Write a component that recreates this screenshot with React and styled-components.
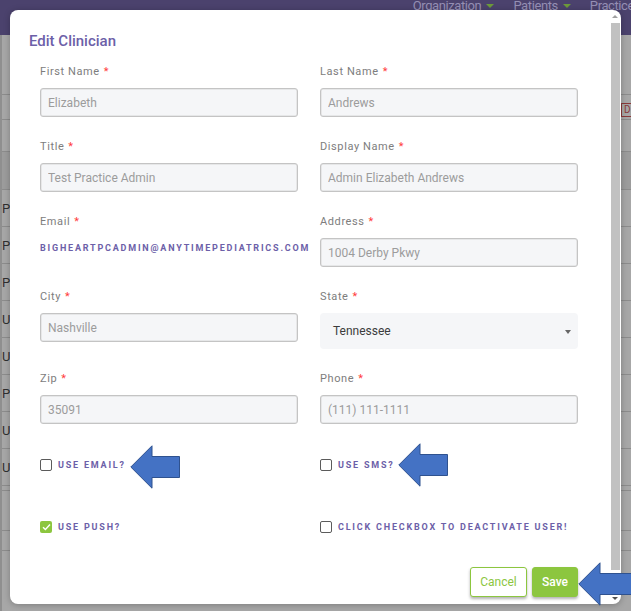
import React from 'react';
import styled, { createGlobalStyle } from 'styled-components';

const Global = createGlobalStyle`
  html, body { margin: 0; padding: 0; }
  body {
    width: 631px; height: 611px; overflow: hidden;
    font-family: Roboto, "Noto Sans", Arial, sans-serif;
    background: #a7a7a7;
  }
  * { box-sizing: border-box; }
`;

const PURPLE = '#6c60a8';
const GREEN = '#8cc63f';

const Page = styled.div`
  position: relative;
  width: 631px;
  height: 611px;
  overflow: hidden;
  background: #a7a7a7;
  display: flex;
  flex-direction: column;
`;

const TopBar = styled.div`
  height: 35px;
  flex: none;
  background: #4b426d;
  display: flex;
  justify-content: flex-end;
  align-items: flex-start;
  overflow: hidden;
`;

const NavList = styled.div`
  display: flex;
  gap: 19px;
  margin-top: -2px;
  margin-right: -3px;
`;

const NavItem = styled.div`
  display: flex;
  align-items: center;
  gap: 5px;
  color: #958fb4;
  font-size: 13px;
  line-height: 15px;
  letter-spacing: -0.4px;
`;

const NavCaret = styled.span`
  width: 0;
  height: 0;
  border-left: 4px solid transparent;
  border-right: 4px solid transparent;
  border-top: 4px solid #6d9a3a;
`;

const Table = styled.div`
  flex: 1;
  display: flex;
  flex-direction: column;
  border-left: 2px solid #8f8f8f;
`;

const TRow = styled.div`
  height: ${p => p.$h}px;
  flex: none;
  display: flex;
  align-items: center;
  justify-content: space-between;
  border-bottom: 1px solid #8c8c8c;
  background: ${p => (p.$dark ? '#9c9c9c' : 'transparent')};
  font-size: 13px;
  color: #2f2f2f;
`;

const Cell = styled.span`
  padding-left: 0;
`;

const TinyButton = styled.span`
  width: 10px;
  height: 14px;
  margin-top: 6px;
  border: 1px solid #8a3a3a;
  border-right: none;
  color: #8a3a3a;
  font-size: 10px;
  line-height: 12px;
  padding-left: 2px;
`;

const Modal = styled.div`
  position: absolute;
  left: 10px;
  top: 10px;
  width: 611px;
  height: 594px;
  background: #fff;
  border-radius: 8px;
  display: flex;
  overflow: hidden;
  box-shadow: 0 1px 6px rgba(0, 0, 0, 0.25);
`;

const ModalBody = styled.div`
  flex: 1;
  display: flex;
  flex-direction: column;
  padding: 22px 31px 7px 19px;
`;

const Title = styled.h2`
  margin: 0;
  font-size: 15px;
  line-height: 18px;
  font-weight: 500;
  color: ${PURPLE};
`;

const Form = styled.div`
  margin-top: 15px;
  padding-left: 11px;
  display: grid;
  grid-template-columns: 258px 258px;
  column-gap: 22px;
  row-gap: 23px;
  align-items: start;
`;

const Field = styled.div`
  display: flex;
  flex-direction: column;
`;

const Label = styled.label`
  font-size: 11px;
  line-height: 14px;
  letter-spacing: 0.6px;
  color: #7d7d7d;
  margin-bottom: 9px;
`;

const Req = styled.span`
  color: #ff3c3c;
  margin-left: 4px;
`;

const Input = styled.input`
  height: 29px;
  width: 100%;
  border: 1px solid #c4c4c4;
  border-radius: 3px;
  background: #f5f6f8;
  padding: 0 7px;
  font-family: inherit;
  font-size: 12px;
  color: #9c9c9c;
  outline: none;
  box-shadow: inset 0 0 0 0.5px #d8d8d8;
`;

const StaticValue = styled.div`
  margin-top: 3px;
  font-size: 9px;
  line-height: 14px;
  font-weight: 700;
  letter-spacing: 1.8px;
  color: ${PURPLE};
  white-space: nowrap;
`;

const SelectBox = styled.div`
  height: 36px;
  border-radius: 4px;
  background: #f5f6f8;
  display: flex;
  align-items: center;
  justify-content: space-between;
  padding: 0 7px 0 13px;
  font-size: 12px;
  color: #3c3c3c;
`;

const SelectCaret = styled.span`
  width: 0;
  height: 0;
  border-left: 3.5px solid transparent;
  border-right: 3.5px solid transparent;
  border-top: 4px solid #666;
  margin-top: 1px;
`;

const Checks = styled.div`
  margin-top: 34px;
  padding-left: 11px;
  display: grid;
  grid-template-columns: 258px 258px;
  column-gap: 22px;
  row-gap: 48px;
`;

const CheckRow = styled.div`
  display: flex;
  align-items: center;
  gap: 6px;
  height: 14px;
`;

const Box = styled.span`
  width: 12px;
  height: 12px;
  flex: none;
  border-radius: 2px;
  border: ${p => (p.$checked ? 'none' : '1.5px solid #5b5b5b')};
  background: ${p => (p.$checked ? GREEN : '#fff')};
  display: flex;
  align-items: center;
  justify-content: center;
`;

const CheckText = styled.span`
  font-size: 9px;
  font-weight: 700;
  letter-spacing: 1.8px;
  color: ${PURPLE};
  white-space: nowrap;
`;

const Footer = styled.div`
  margin-top: auto;
  display: flex;
  justify-content: flex-end;
  gap: 5px;
`;

const Button = styled.button`
  height: 30px;
  padding: 0;
  width: ${p => p.$w}px;
  border-radius: 3px;
  font-family: inherit;
  font-size: 12px;
  font-weight: ${p => (p.$primary ? 500 : 400)};
  border: 1.5px solid ${GREEN};
  background: ${p => (p.$primary ? GREEN : '#fff')};
  color: ${p => (p.$primary ? '#fff' : GREEN)};
  box-shadow: 0 2px 3px rgba(0, 0, 0, 0.3);
`;

const ScrollBar = styled.div`
  width: 12px;
  flex: none;
  display: flex;
  flex-direction: column;
  align-items: center;
  padding: 5px 0 4px;
`;

const ScrollArrow = styled.span`
  width: 0;
  height: 0;
  border-left: 3px solid transparent;
  border-right: 3px solid transparent;
  ${p =>
    p.$up
      ? 'border-bottom: 3px solid #a0a0a0; margin-bottom: 5px;'
      : 'border-top: 3px solid #505050; margin-top: auto;'}
`;

const Thumb = styled.div`
  width: 9px;
  height: 547px;
  background: #c1c1c1;
`;

const Arrow = styled.svg`
  position: absolute;
  left: ${p => p.$x}px;
  top: ${p => p.$y}px;
`;

function BlueArrow({ x, y, w = 50 }) {
  return (
    <Arrow $x={x} $y={y} width={w} height={44} viewBox={`0 0 ${w} 44`}>
      <path
        d={`M0.8 22 L22 0.8 L22 11.5 L${w - 0.5} 11.5 L${w - 0.5} 32.5 L22 32.5 L22 43.2 Z`}
        fill="#4472c4"
        stroke="#2f528f"
        strokeWidth="1"
      />
    </Arrow>
  );
}

function Check() {
  return (
    <svg width="9" height="8" viewBox="0 0 9 8">
      <path d="M1 4.2 L3.4 6.5 L8 1.5" fill="none" stroke="#fff" strokeWidth="1.4" />
    </svg>
  );
}

function TextField({ label, value }) {
  return (
    <Field>
      <Label>
        {label}
        <Req>*</Req>
      </Label>
      <Input readOnly value={value} />
    </Field>
  );
}

function CheckItem({ label, checked }) {
  return (
    <CheckRow>
      <Box $checked={checked}>{checked && <Check />}</Box>
      <CheckText>{label}</CheckText>
    </CheckRow>
  );
}

const rows = ['P', 'P', 'P', 'U', 'U', 'P', 'U', 'U'];

export default function App() {
  return (
    <>
      <Global />
      <Page>
        <TopBar>
          <NavList>
            <NavItem>
              Organization <NavCaret />
            </NavItem>
            <NavItem>
              Patients <NavCaret />
            </NavItem>
            <NavItem>Practice</NavItem>
          </NavList>
        </TopBar>
        <Table>
          <TRow $h={60} />
          <TRow $h={25}>
            <Cell />
            <TinyButton>D</TinyButton>
          </TRow>
          <TRow $h={32} />
          <TRow $h={38} $dark />
          {rows.map((r, i) => (
            <TRow key={i} $h={37}>
              <Cell>{r}</Cell>
            </TRow>
          ))}
          <TRow $h={5} />
          <TRow $h={40} />
          <TRow $h={20} />
        </Table>

        <Modal>
          <ModalBody>
            <Title>Edit Clinician</Title>
            <Form>
              <TextField label="First Name" value="Elizabeth" />
              <TextField label="Last Name" value="Andrews" />
              <TextField label="Title" value="Test Practice Admin" />
              <TextField label="Display Name" value="Admin Elizabeth Andrews" />
              <Field>
                <Label>
                  Email<Req>*</Req>
                </Label>
                <StaticValue>BIGHEARTPCADMIN@ANYTIMEPEDIATRICS.COM</StaticValue>
              </Field>
              <TextField label="Address" value="1004 Derby Pkwy" />
              <TextField label="City" value="Nashville" />
              <Field>
                <Label>
                  State<Req>*</Req>
                </Label>
                <SelectBox>
                  Tennessee
                  <SelectCaret />
                </SelectBox>
              </Field>
              <TextField label="Zip" value="35091" />
              <TextField label="Phone" value="(111) 111-1111" />
            </Form>
            <Checks>
              <CheckItem label="USE EMAIL?" />
              <CheckItem label="USE SMS?" />
              <CheckItem label="USE PUSH?" checked />
              <CheckItem label="CLICK CHECKBOX TO DEACTIVATE USER!" />
            </Checks>
            <Footer>
              <Button $w={57}>Cancel</Button>
              <Button $w={46} $primary>
                Save
              </Button>
            </Footer>
          </ModalBody>
          <ScrollBar>
            <ScrollArrow $up />
            <Thumb />
            <ScrollArrow />
          </ScrollBar>
        </Modal>

        <BlueArrow x={130} y={445} />
        <BlueArrow x={398} y={443} />
        <BlueArrow x={578} y={562} w={60} />
      </Page>
    </>
  );
}
